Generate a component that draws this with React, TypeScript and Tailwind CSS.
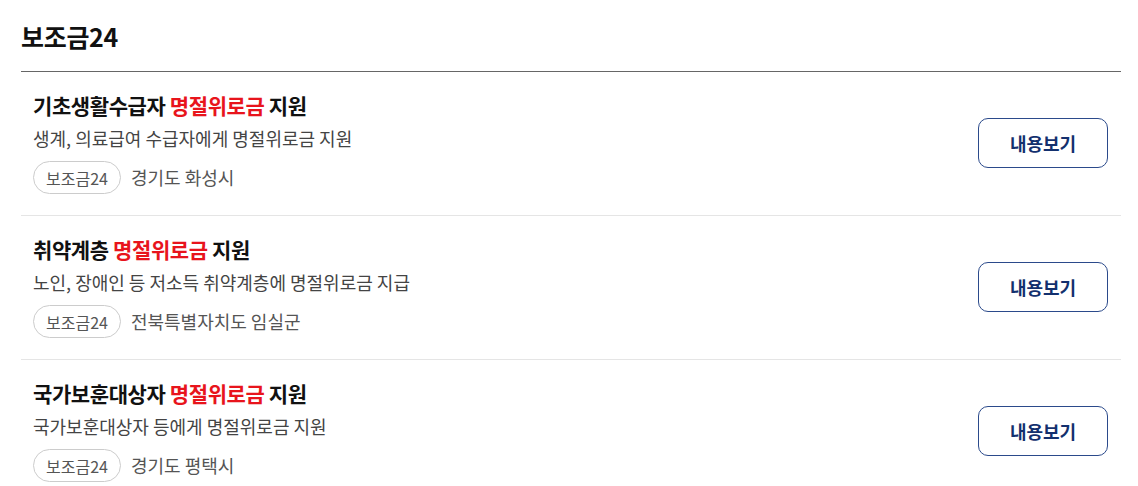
import React from 'react'

interface Benefit {
    id: number
    prefix: string
    desc: string
    region: string
}

const items: Benefit[] = [
    { id: 1, prefix: '기초생활수급자', desc: '생계, 의료급여 수급자에게 명절위로금 지원', region: '경기도 화성시' },
    { id: 2, prefix: '취약계층', desc: '노인, 장애인 등 저소득 취약계층에 명절위로금 지급', region: '전북특별자치도 임실군' },
    { id: 3, prefix: '국가보훈대상자', desc: '국가보훈대상자 등에게 명절위로금 지원', region: '경기도 평택시' },
]

export default function App() {
    return (
        <div className="min-h-screen bg-white pl-[21px] pr-[17px] pt-[19px] text-[#111] font-['Noto_Sans_CJK_KR','Noto_Sans',sans-serif]">
            <h2 className="text-[25px] font-bold leading-[34px] tracking-[-0.3px] pb-[18px] border-b border-[#666]">보조금24</h2>

            <ul>
                {items.map((item) => (
                    <li key={item.id} className="flex items-center justify-between pl-[12px] pr-[13px] pt-[20px] pb-[21px] border-b border-[#e5e5e5]">
                        <div className="flex flex-col">
                            <p className="text-[21px] font-bold leading-[26px] tracking-[-0.4px]">
                                {item.prefix} <span className="text-[#e8141c]">명절위로금</span> 지원
                            </p>
                            <p className="mt-[7px] text-[18px] leading-[26px] text-[#444]">{item.desc}</p>
                            <div className="mt-[10px] flex items-center gap-[10px]">
                                <span className="h-[33px] px-[12px] flex items-center rounded-full border border-[#ccc] text-[16px] text-[#555]">보조금24</span>
                                <span className="text-[18px] text-[#555]">{item.region}</span>
                            </div>
                        </div>
                        <button className="w-[130px] h-[50px] rounded-[10px] border border-[#2b4a8b] text-[18px] font-bold text-[#13306e] bg-white">
                            내용보기
                        </button>
                    </li>
                ))}
            </ul>
        </div>
    )
}
